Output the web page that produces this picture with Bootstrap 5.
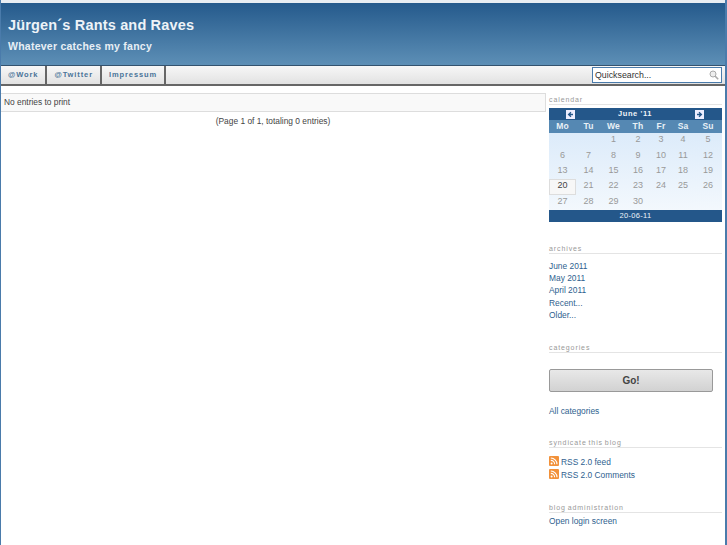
<!DOCTYPE html>
<html lang="en">
  <head>
    <meta charset="UTF-8" />
    <title>Jürgen´s Rants and Raves</title>
    <link href="https://cdn.jsdelivr.net/npm/bootstrap@5.3.0/dist/css/bootstrap.min.css" rel="stylesheet" />
    <script src="https://cdn.jsdelivr.net/npm/bootstrap@5.3.0/dist/js/bootstrap.bundle.min.js"></script>
    <style>
      html, body { height: 545px; overflow: hidden; }
      body {
        background: #fff;
        font-family: "Liberation Sans", Arial, sans-serif;
        font-size: 8.4px;
        color: #444;
      }
      a { color: #2f5f8f; text-decoration: none; }
      .page-wrap {
        height: 545px;
        padding-top: 3px;
        border-left: 1px solid #4a7bab;
        border-right: 2px solid #4a7bab;
        background: linear-gradient(#e8edf2 0, #e8edf2 3px, #fff 3px);
      }
      .blog-head {
        height: 62px;
        padding: 14px 7px 0;
        background: linear-gradient(#255a8c, #5d8fb6);
        color: #fff;
      }
      .blog-title { font-size: 14.5px; font-weight: 700; line-height: 16px; letter-spacing: .17px; margin: 0; color: #eef3f8; }
      .blog-sub { font-size: 10.5px; font-weight: 700; line-height: 13px; margin: 7px 0 0; color: #e8eff5; letter-spacing: .25px; }
      .top-nav {
        height: 21px;
        border-top: 1px solid #34536f;
        border-bottom: 2px solid #666;
        background: linear-gradient(#f7f7f7, #e2e2e2);
      }
      .top-nav a {
        display: block;
        height: 18px;
        line-height: 17px;
        padding: 0 7px;
        border-right: 2px solid #666;
        font-size: 7.5px;
        font-weight: 700;
        letter-spacing: .9px;
        color: #4a7499;
      }
      .search-box {
        width: 130px;
        height: 16px;
        margin: 1px 3px 0 0;
        padding: 0 2px;
        border: 1px solid #4a7bab;
        background: #fff;
        font-size: 8.8px;
        line-height: 14px;
        color: #333;
      }
      .main-col { width: 546px; padding-top: 7px; }
      .side-col { width: 178px; padding: 9px 3px 0 2px; }
      .no-entries {
        height: 19px;
        margin-right: 1px;
        padding-left: 3px;
        line-height: 17px;
        border: 1px solid #ddd;
        border-left: 0;
        background: #f9f9f9;
        color: #444;
      }
      .page-info { margin-top: 4px; text-align: center; line-height: 11px; padding-right: 2px; }
      .side-title {
        font-size: 7px;
        line-height: 9px;
        letter-spacing: .9px;
        word-spacing: -1px;
        color: #999;
        border-bottom: 1px solid #e4e4e4;
      }
      .side-block a { display: block; line-height: 12.2px; }
      .cal-grid { width: 173px; border-collapse: collapse; table-layout: fixed; text-align: center; }
      .cal-grid td, .cal-grid th { padding: 0; }
      .cal-top th { height: 12px; background: #24578a; color: #eef3f8; font-size: 7.5px; letter-spacing: .6px; }
      .cal-top .cal-prev { text-align: right; padding-right: 1px; }
      .cal-top .cal-next { text-align: left; padding-left: 1px; }
      .cal-days th { height: 13px; background: #5588b3; color: #e8f0f6; font-size: 8.5px; letter-spacing: .2px; }
      .cal-grid .cal-body td { height: 15.4px; padding-bottom: 2px; line-height: 13px; color: #999; font-size: 9px; }
      .cal-body { background: linear-gradient(#dcebfa, #f3f8fd); }
      .cal-grid .cal-body .cal-today { box-shadow: inset 0 0 0 1px #ddd; background: #f7f7f7; color: #444; }
      .cal-foot td { height: 12px; background: #24578a; color: #eef3f8; font-size: 7.5px; letter-spacing: .3px; }
      .cal-arrow { display: inline-block; vertical-align: middle; }
      .go-btn {
        display: block;
        width: 164px;
        height: 23px;
        padding: 0;
        border: 1px solid #999;
        border-radius: 2px;
        background: linear-gradient(#e8e8e8, #d2d2d2);
        color: #444;
        font-size: 10px;
        font-weight: 700;
      }
      .rss-row { display: flex !important; align-items: flex-start; gap: 2px; line-height: 13px !important; }
    </style>
  </head>
  <body>
    <div class="page-wrap">
      <div class="blog-head">
        <h1 class="blog-title">Jürgen´s Rants and Raves</h1>
        <p class="blog-sub">Whatever catches my fancy</p>
      </div>
      <div class="top-nav d-flex justify-content-between">
        <div class="d-flex">
          <a href="#">@Work</a>
          <a href="#">@Twitter</a>
          <a href="#">Impressum</a>
        </div>
        <div class="search-box d-flex justify-content-between align-items-center">
          <span>Quicksearch...</span>
          <svg width="10" height="10" viewBox="0 0 10 10"><circle cx="4" cy="4" r="3" fill="#eee" stroke="#aaa"/><path d="M6 6l3.2 3.2" stroke="#aaa" stroke-width="1.6"/></svg>
        </div>
      </div>
      <div class="d-flex">
        <div class="main-col">
          <div class="no-entries">No entries to print</div>
          <div class="page-info">(Page 1 of 1, totaling 0 entries)</div>
        </div>
        <div class="side-col">
          <div class="side-block" style="margin-bottom: 22px">
            <div class="side-title" style="margin-bottom: 3px">calendar</div>
            <table class="cal-grid">
              <colgroup>
                <col style="width: 27px" /><col style="width: 25px" /><col style="width: 25px" /><col style="width: 24px" /><col style="width: 22px" /><col style="width: 22px" /><col style="width: 28px" />
              </colgroup>
              <tr class="cal-top">
                <th class="cal-prev"><svg class="cal-arrow" width="9" height="9" viewBox="0 0 9 9"><rect width="9" height="9" fill="#eef"/><path d="M7 4.5H3M5 2.3L2.6 4.5 5 6.7" fill="none" stroke="#24578a" stroke-width="1.3"/></svg></th>
                <th colspan="5">June '11</th>
                <th class="cal-next"><svg class="cal-arrow" width="9" height="9" viewBox="0 0 9 9"><rect width="9" height="9" fill="#eef"/><path d="M2 4.5h4M4 2.3l2.4 2.2L4 6.7" fill="none" stroke="#24578a" stroke-width="1.3"/></svg></th>
              </tr>
              <tr class="cal-days"><th>Mo</th><th>Tu</th><th>We</th><th>Th</th><th>Fr</th><th>Sa</th><th>Su</th></tr>
              <tbody class="cal-body">
                <tr><td></td><td></td><td>1</td><td>2</td><td>3</td><td>4</td><td>5</td></tr>
                <tr><td>6</td><td>7</td><td>8</td><td>9</td><td>10</td><td>11</td><td>12</td></tr>
                <tr><td>13</td><td>14</td><td>15</td><td>16</td><td>17</td><td>18</td><td>19</td></tr>
                <tr><td class="cal-today">20</td><td>21</td><td>22</td><td>23</td><td>24</td><td>25</td><td>26</td></tr>
                <tr><td>27</td><td>28</td><td>29</td><td>30</td><td></td><td></td><td></td></tr>
              </tbody>
              <tr class="cal-foot"><td colspan="7">20-06-11</td></tr>
            </table>
          </div>
          <div class="side-block" style="margin-bottom: 22px">
            <div class="side-title" style="margin-bottom: 6px">archives</div>
            <a href="#">June 2011</a>
            <a href="#">May 2011</a>
            <a href="#">April 2011</a>
            <a href="#">Recent...</a>
            <a href="#">Older...</a>
          </div>
          <div class="side-block" style="margin-bottom: 21px">
            <div class="side-title" style="margin-bottom: 16px">categories</div>
            <button class="go-btn" type="button">Go!</button>
            <a href="#" style="margin-top: 13px">All categories</a>
          </div>
          <div class="side-block" style="margin-bottom: 21px">
            <div class="side-title" style="margin-bottom: 8px">syndicate this blog</div>
            <a href="#" class="rss-row"><svg width="10" height="10" viewBox="0 0 10 10"><rect width="10" height="10" rx="1" fill="#f2913a"/><circle cx="2.6" cy="7.4" r="1" fill="#fff"/><path d="M1.8 4.4a3.8 3.8 0 0 1 3.8 3.8M1.8 2a6.2 6.2 0 0 1 6.2 6.2" fill="none" stroke="#fff" stroke-width="1.1"/></svg>RSS 2.0 feed</a>
            <a href="#" class="rss-row"><svg width="10" height="10" viewBox="0 0 10 10"><rect width="10" height="10" rx="1" fill="#f2913a"/><circle cx="2.6" cy="7.4" r="1" fill="#fff"/><path d="M1.8 4.4a3.8 3.8 0 0 1 3.8 3.8M1.8 2a6.2 6.2 0 0 1 6.2 6.2" fill="none" stroke="#fff" stroke-width="1.1"/></svg>RSS 2.0 Comments</a>
          </div>
          <div class="side-block">
            <div class="side-title" style="margin-bottom: 2px">blog administration</div>
            <a href="#">Open login screen</a>
          </div>
        </div>
      </div>
    </div>
  </body>
</html>
